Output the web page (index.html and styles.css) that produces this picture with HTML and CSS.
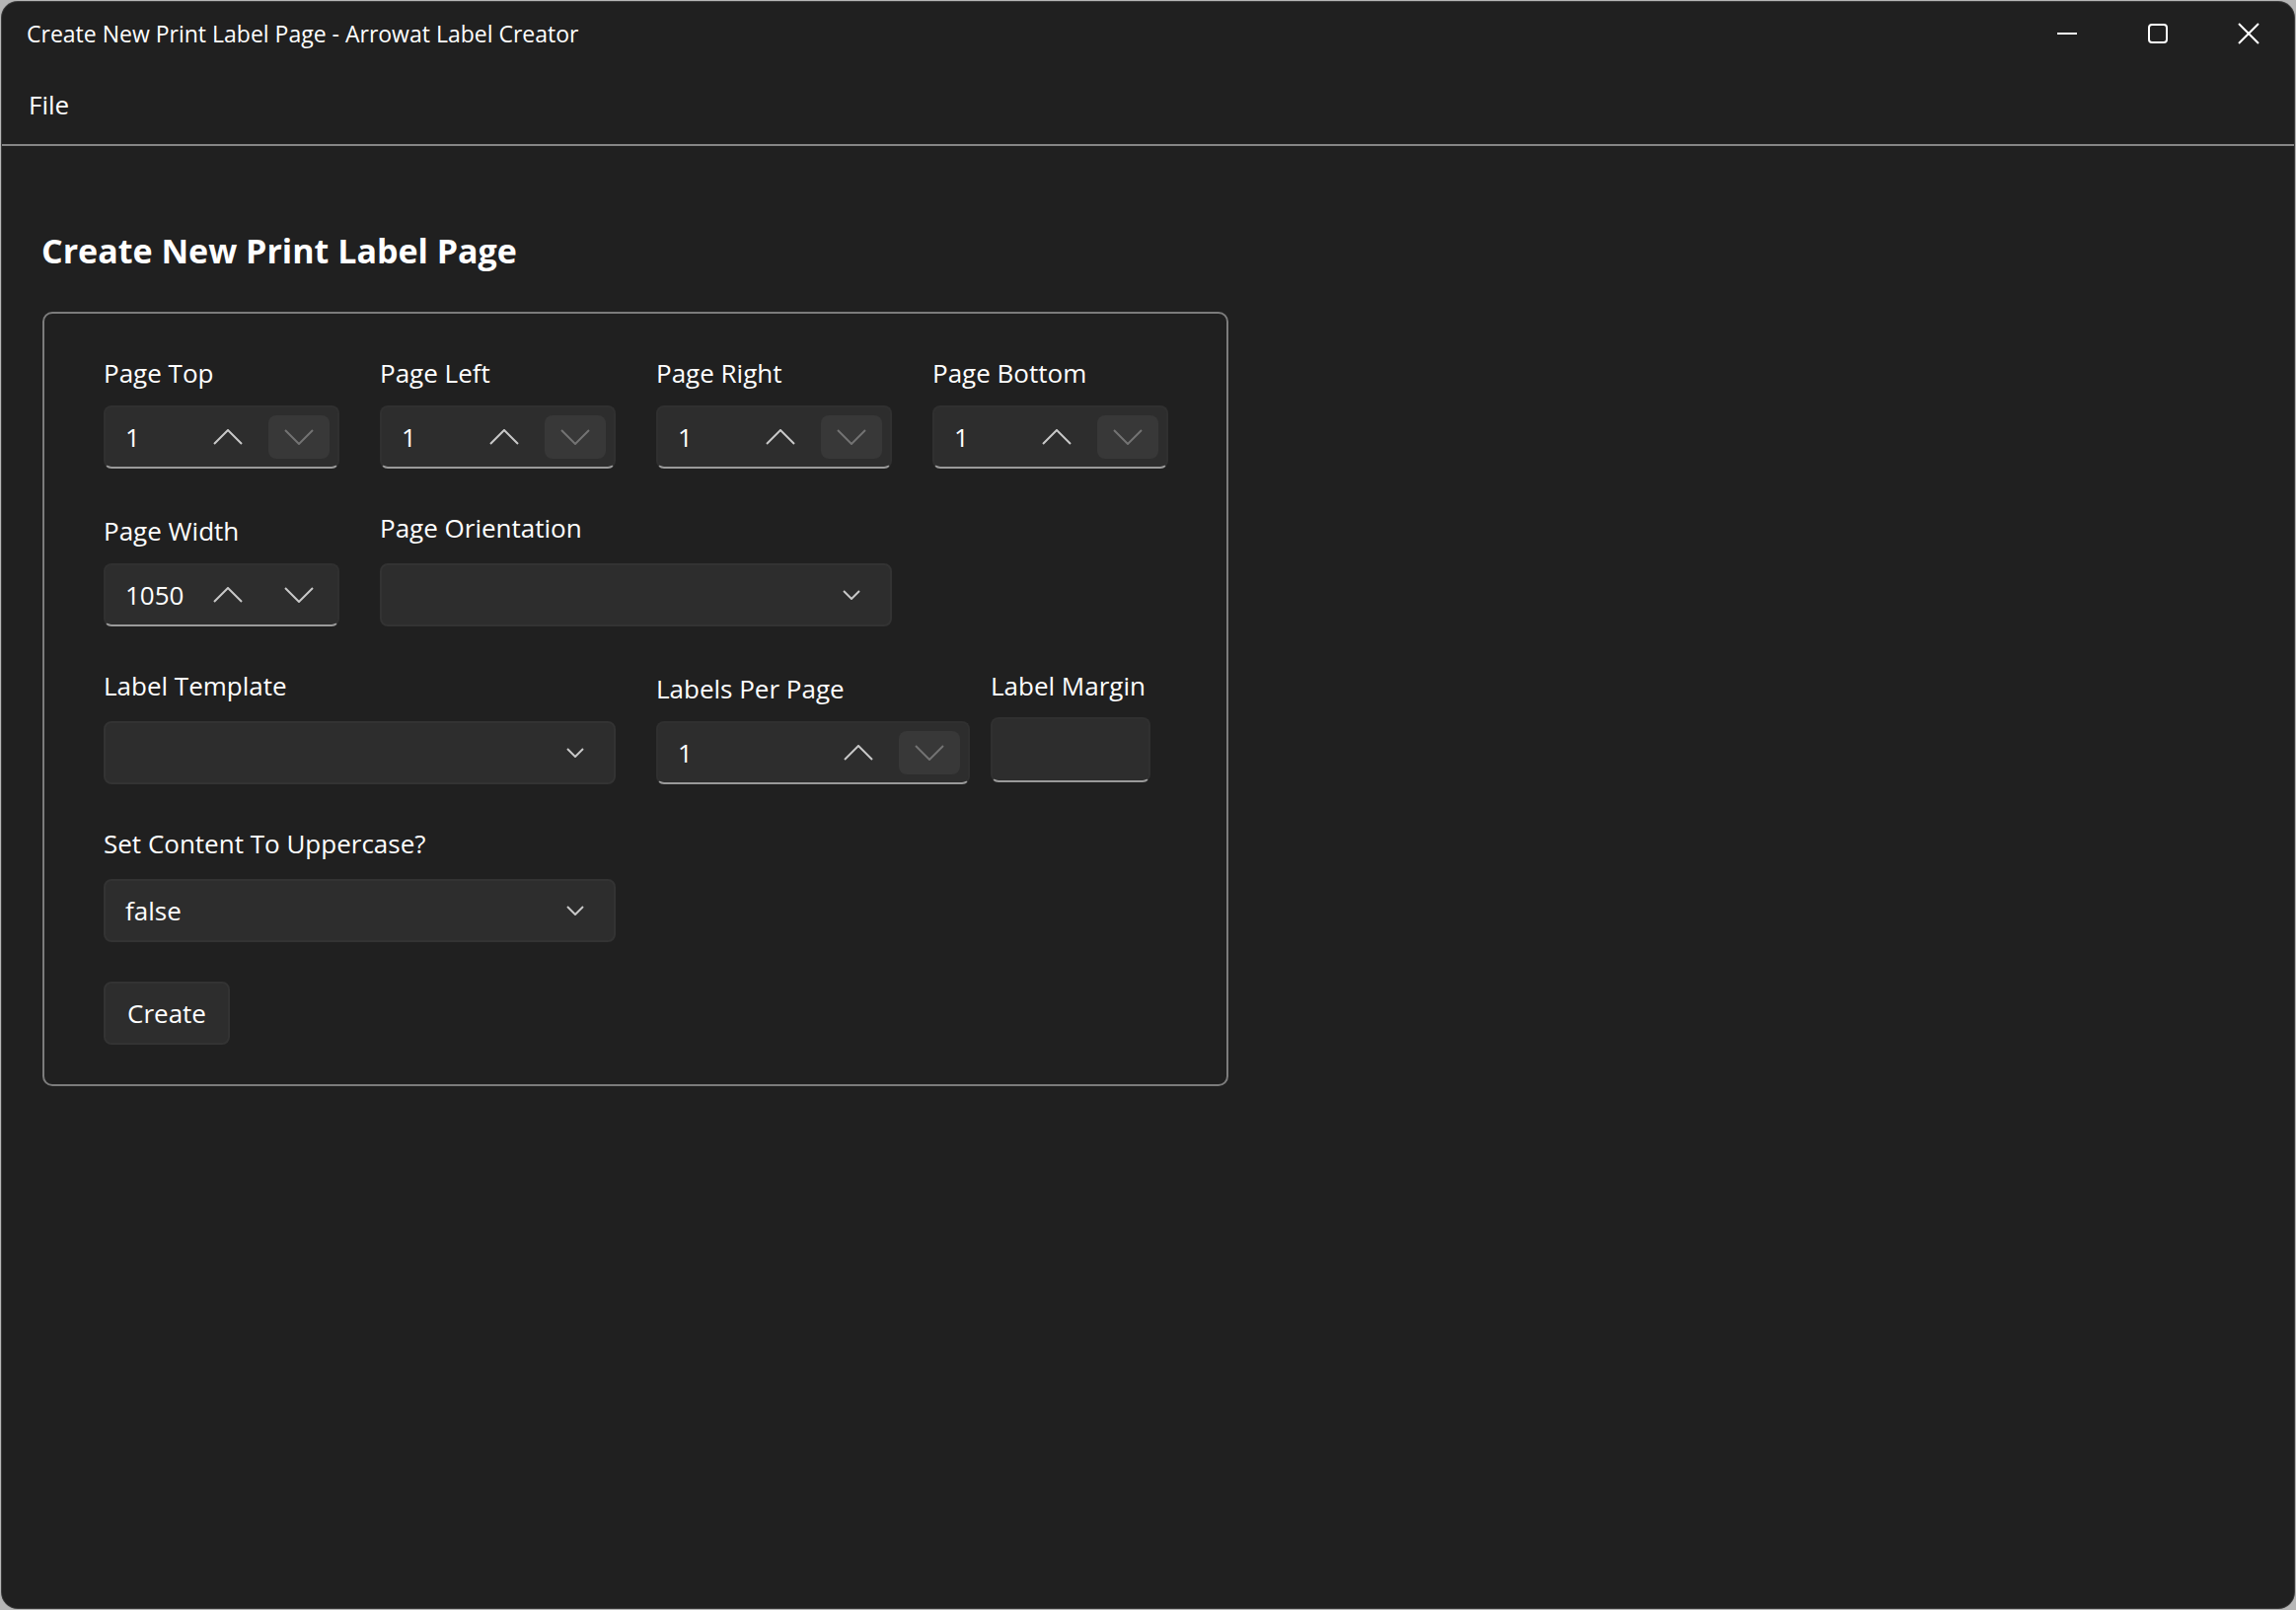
FILE: index.html
```html
<!DOCTYPE html>
<html lang="en">
<head>
<meta charset="utf-8">
<title>Create New Print Label Page - Arrowat Label Creator</title>
<link rel="stylesheet" href="styles.css">
</head>
<body>
<div class="window">
  <header class="titlebar">
    <div class="title">Create New Print Label Page - Arrowat Label Creator</div>
    <div class="caption-buttons">
      <div class="cap-btn">
        <svg width="20" height="20" viewBox="0 0 20 20"><path d="M0 10 H20" stroke="#fff" stroke-width="2" fill="none"/></svg>
      </div>
      <div class="cap-btn">
        <svg width="22" height="22" viewBox="0 0 22 22"><rect x="2" y="2" width="18" height="18" rx="3" stroke="#fff" stroke-width="2" fill="none"/></svg>
      </div>
      <div class="cap-btn">
        <svg width="22" height="22" viewBox="0 0 22 22"><path d="M1 1 L21 21 M21 1 L1 21" stroke="#fff" stroke-width="2" fill="none"/></svg>
      </div>
    </div>
  </header>
  <nav class="menubar">
    <div class="menu-item">File</div>
  </nav>
  <main class="content">
    <h1 class="page-heading">Create New Print Label Page</h1>
    <section class="card">
      <div class="form-row">
        <div class="field w-num">
          <div class="field-label">Page Top</div>
          <div class="numberbox">
            <span class="nb-value">1</span>
            <span class="spin"><svg width="30" height="16" viewBox="0 0 30 16"><path d="M1 15 L15 1 L29 15" class="chev-on"/></svg></span>
            <span class="spin spin-off"><svg width="30" height="16" viewBox="0 0 30 16"><path d="M1 1 L15 15 L29 1" class="chev-off"/></svg></span>
          </div>
        </div>
        <div class="field w-num">
          <div class="field-label">Page Left</div>
          <div class="numberbox">
            <span class="nb-value">1</span>
            <span class="spin"><svg width="30" height="16" viewBox="0 0 30 16"><path d="M1 15 L15 1 L29 15" class="chev-on"/></svg></span>
            <span class="spin spin-off"><svg width="30" height="16" viewBox="0 0 30 16"><path d="M1 1 L15 15 L29 1" class="chev-off"/></svg></span>
          </div>
        </div>
        <div class="field w-num">
          <div class="field-label">Page Right</div>
          <div class="numberbox">
            <span class="nb-value">1</span>
            <span class="spin"><svg width="30" height="16" viewBox="0 0 30 16"><path d="M1 15 L15 1 L29 15" class="chev-on"/></svg></span>
            <span class="spin spin-off"><svg width="30" height="16" viewBox="0 0 30 16"><path d="M1 1 L15 15 L29 1" class="chev-off"/></svg></span>
          </div>
        </div>
        <div class="field w-num">
          <div class="field-label">Page Bottom</div>
          <div class="numberbox">
            <span class="nb-value">1</span>
            <span class="spin"><svg width="30" height="16" viewBox="0 0 30 16"><path d="M1 15 L15 1 L29 15" class="chev-on"/></svg></span>
            <span class="spin spin-off"><svg width="30" height="16" viewBox="0 0 30 16"><path d="M1 1 L15 15 L29 1" class="chev-off"/></svg></span>
          </div>
        </div>
      </div>

      <div class="form-row">
        <div class="field w-num">
          <div class="field-label">Page Width</div>
          <div class="numberbox">
            <span class="nb-value">1050</span>
            <span class="spin"><svg width="30" height="16" viewBox="0 0 30 16"><path d="M1 15 L15 1 L29 15" class="chev-on"/></svg></span>
            <span class="spin"><svg width="30" height="16" viewBox="0 0 30 16"><path d="M1 1 L15 15 L29 1" class="chev-on"/></svg></span>
          </div>
        </div>
        <div class="field w-wide combo-field">
          <div class="field-label">Page Orientation</div>
          <div class="combobox">
            <span class="cb-value"></span>
            <svg class="cb-chev" width="18" height="10" viewBox="0 0 18 10"><path d="M1 1 L9 9 L17 1" class="chev-on"/></svg>
          </div>
        </div>
      </div>

      <div class="form-row">
        <div class="field w-wide combo-field">
          <div class="field-label">Label Template</div>
          <div class="combobox">
            <span class="cb-value"></span>
            <svg class="cb-chev" width="18" height="10" viewBox="0 0 18 10"><path d="M1 1 L9 9 L17 1" class="chev-on"/></svg>
          </div>
        </div>
        <div class="field w-lpp">
          <div class="field-label">Labels Per Page</div>
          <div class="numberbox">
            <span class="nb-value">1</span>
            <span class="spin"><svg width="30" height="16" viewBox="0 0 30 16"><path d="M1 15 L15 1 L29 15" class="chev-on"/></svg></span>
            <span class="spin spin-off"><svg width="30" height="16" viewBox="0 0 30 16"><path d="M1 1 L15 15 L29 1" class="chev-off"/></svg></span>
          </div>
        </div>
        <div class="field w-margin text-field">
          <div class="field-label">Label Margin</div>
          <div class="textbox"></div>
        </div>
      </div>

      <div class="form-row">
        <div class="field w-wide combo-field">
          <div class="field-label">Set Content To Uppercase?</div>
          <div class="combobox">
            <span class="cb-value">false</span>
            <svg class="cb-chev" width="18" height="10" viewBox="0 0 18 10"><path d="M1 1 L9 9 L17 1" class="chev-on"/></svg>
          </div>
        </div>
      </div>

      <div class="actions">
        <button class="btn" type="button">Create</button>
      </div>
    </section>
  </main>
</div>
</body>
</html>
```

FILE: styles.css
```css
* { box-sizing: border-box; }

html, body {
  margin: 0;
  padding: 0;
  width: 2327px;
  height: 1632px;
  overflow: hidden;
}

body {
  background: #b6b6b6;
  font-family: "Open Sans", "Noto Sans", "DejaVu Sans", sans-serif;
  color: #ffffff;
}

.window {
  margin: 2px;
  width: 2323px;
  height: 1628px;
  background: #202020;
  border-radius: 16px;
  overflow: hidden;
  box-shadow: 0 0 0 1px #3a3a3a;
  display: flex;
  flex-direction: column;
}

.titlebar {
  height: 64px;
  display: flex;
  align-items: center;
  justify-content: space-between;
  flex: none;
}

.title {
  padding-left: 25px;
  font-size: 23px;
  line-height: 64px;
  color: #ffffff;
}

.caption-buttons {
  display: flex;
  height: 64px;
}

.cap-btn {
  width: 92px;
  height: 64px;
  display: flex;
  align-items: center;
  justify-content: center;
}

.menubar {
  height: 82px;
  flex: none;
  border-bottom: 2px solid #868686;
  display: flex;
  align-items: center;
  padding-left: 27px;
}

.menu-item {
  font-size: 26px;
  line-height: 40px;
  margin-top: 0;
}

.content {
  padding-left: 41px;
  flex: 1;
}

.page-heading {
  margin: 84px 0 40px -1px;
  font-size: 34px;
  line-height: 44px;
  font-weight: 700;
  letter-spacing: 0;
}

.card {
  width: 1202px;
  border: 2px solid #7c7c7c;
  border-radius: 10px;
  padding: 40px 0 40px 60px;
  display: flex;
  flex-direction: column;
  gap: 43px;
}

.form-row {
  display: flex;
  gap: 41px;
}

.field {
  display: flex;
  flex-direction: column;
}

.field-label {
  height: 40px;
  line-height: 40px;
  font-size: 26px;
  margin-bottom: 13px;
  white-space: nowrap;
}

.combo-field .field-label {
  margin-top: -3px;
  margin-bottom: 16px;
}

.text-field .field-label {
  margin-top: -3px;
  margin-bottom: 14px;
}

.w-num { width: 239px; }
.w-wide { width: 519px; }
.w-lpp { width: 318px; }
.w-margin { width: 162px; margin-left: -20px; }

.numberbox {
  height: 64px;
  background: #2d2d2d;
  border: 2px solid #303030;
  border-bottom-color: #9a9a9a;
  border-radius: 8px;
  display: flex;
  align-items: center;
  gap: 10px;
  padding: 0 8px 0 20px;
}

.nb-value {
  flex: 1;
  font-size: 26px;
  line-height: 40px;
}

.spin {
  width: 62px;
  height: 44px;
  border-radius: 8px;
  display: flex;
  align-items: center;
  justify-content: center;
}

.spin-off {
  background: #383838;
}

.chev-on {
  fill: none;
  stroke: #c8c8c8;
  stroke-width: 2;
}

.chev-off {
  fill: none;
  stroke: #737373;
  stroke-width: 2;
}

.combobox {
  height: 64px;
  background: #2d2d2d;
  border: 2px solid #333333;
  border-radius: 8px;
  display: flex;
  align-items: center;
  padding: 0 30px 0 20px;
}

.cb-value {
  flex: 1;
  font-size: 26px;
  line-height: 40px;
}

.cb-chev { flex: none; }

.textbox {
  height: 66px;
  margin-top: -2px;
  background: #2d2d2d;
  border: 2px solid #303030;
  border-bottom-color: #9a9a9a;
  border-radius: 8px;
}

.actions {
  display: flex;
  margin-top: -3px;
}

.btn {
  width: 128px;
  height: 64px;
  background: #2d2d2d;
  border: 2px solid #333333;
  border-radius: 8px;
  color: #ffffff;
  font-family: "Open Sans", "Noto Sans", "DejaVu Sans", sans-serif;
  font-size: 26px;
  line-height: 40px;
  padding: 0;
}
```
